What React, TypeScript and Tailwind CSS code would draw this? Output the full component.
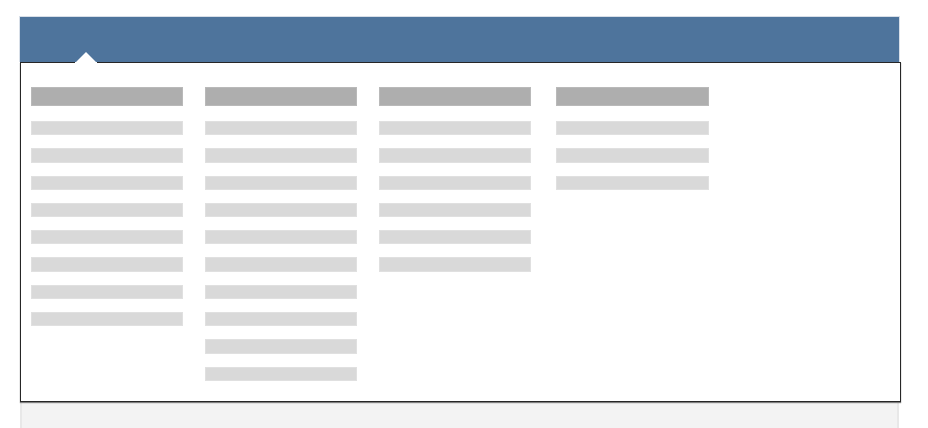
const columns = [8, 10, 6, 3]

function Column({ rows, className = '' }: { rows: number; className?: string }) {
  return (
    <div className={`w-[152px] flex flex-col ${className}`}>
      <div className="h-[19px] bg-[#aeaeae] border border-[#b9b9b9]" />
      <div className="mt-[15px] flex flex-col gap-[13px]">
        {Array.from({ length: rows }).map((_, i) => (
          <div key={i} className="h-[14.3px] bg-[#d9d9d9] border border-[#e0e0e0]" />
        ))}
      </div>
    </div>
  )
}

export default function App() {
  return (
    <div className="w-[928px] h-[428px] bg-white overflow-hidden">
      <div className="ml-[19px] pt-[16px] w-[882px]">
        {/* nav bar */}
        <div className="relative h-[46px] w-[881px] bg-[#4e749c] border border-b-0 border-[#d8dfe8]">
          <svg
            className="absolute left-[54px] top-[34px]"
            width="24"
            height="13"
            viewBox="0 0 24 13"
          >
            <polygon points="0,13 12,1 24,13" fill="#ffffff" />
          </svg>
        </div>

        {/* dropdown panel */}
        <div className="relative ml-[1px] h-[340px] w-[881px] bg-white border border-[#262626] shadow-[0_1px_1px_rgba(0,0,0,0.5)]">
          <div className="flex pl-[10px] pt-[24px] gap-[22px]">
            <Column rows={columns[0]} />
            <Column rows={columns[1]} />
            <Column rows={columns[2]} />
            <Column rows={columns[3]} className="ml-[3px] w-[153px]" />
          </div>
          {/* caret notch over the top border */}
          <div className="absolute left-[54px] -top-[1px] w-[22px] h-[2px] bg-white" />
        </div>

        {/* footer strip */}
        <div className="ml-[1px] mt-[1px] h-[30px] w-[879px] bg-[#f3f3f3] border-x-2 border-[#e8e8e8]" />
      </div>
    </div>
  )
}
